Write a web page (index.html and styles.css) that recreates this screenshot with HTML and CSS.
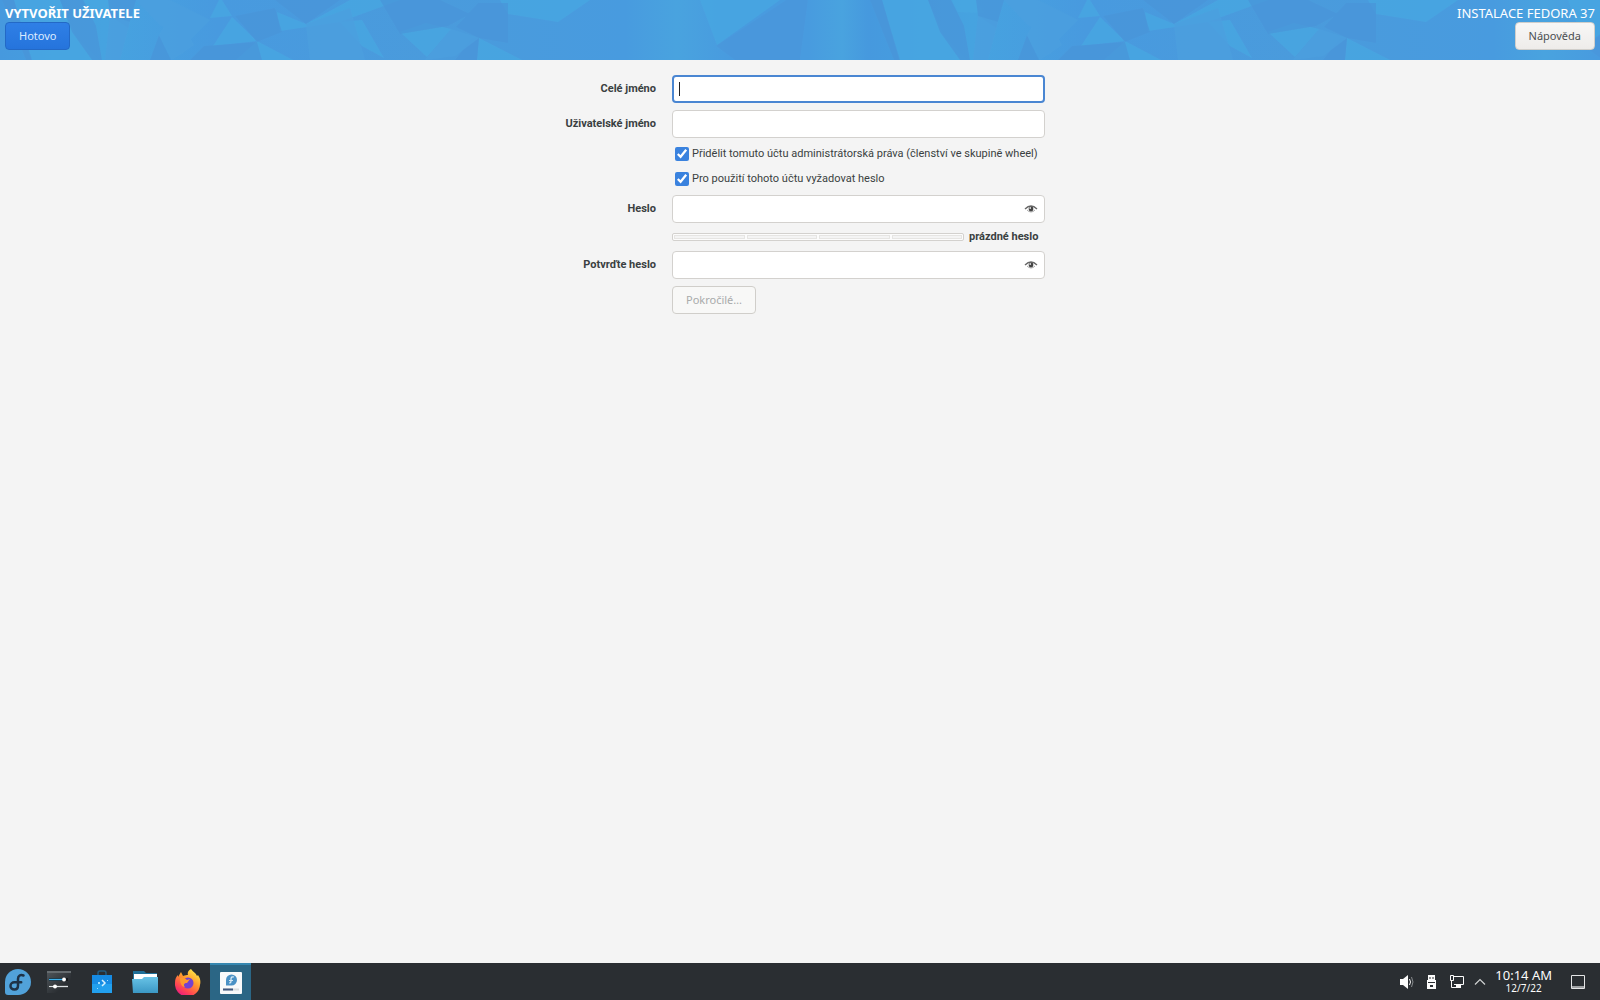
FILE: index.html
```html
<!DOCTYPE html>
<html lang="cs">
<head>
<meta charset="utf-8">
<title>Vytvořit uživatele</title>
<link rel="stylesheet" href="styles.css">
</head>
<body>
<header class="header">
  <svg class="header-art" aria-hidden="true">
    <defs>
      <linearGradient id="shade"><stop offset="0" stop-color="#4699de"/><stop offset=".12" stop-color="#46a3e0"/><stop offset=".25" stop-color="#489adf"/><stop offset=".5" stop-color="#4a9bdc"/><stop offset=".72" stop-color="#489bdf"/><stop offset=".78" stop-color="#49a3df"/><stop offset=".84" stop-color="#489bdf"/><stop offset=".93" stop-color="#489bdf"/><stop offset=".97" stop-color="#49a3df"/><stop offset="1" stop-color="#4699de"/></linearGradient>
      <pattern id="facets" width="868" height="60" patternUnits="userSpaceOnUse">
        <rect width="868" height="60" fill="url(#shade)"/>
        <g fill="#46a7e1" fill-opacity=".75">
          <path d="M14 0h46l26 60H31zM84 0h24l8 13-26-1zM222 0h-3l-9 18 22-2zM232 17l25 24-44 5zM277 12l29 12 44-24 50 0-60 22-60 9zM72 32l27 28H78zM340 22l22-2 22 38-22-12zM400 32l26-9 25 6-24 28zM479 38l43 22h-45zM500 0h90l-32 22-50-8zM700 0h80l-63 45zM257 41l36 19h-57z"/>
        </g>
        <g fill="#4994d9" fill-opacity=".7">
          <path d="M2 0h12l18 60h-6zM60 0h23l13 26 6 34H92L72 32zM108 0h28l-8 28-18-12zM235 16l40-8 7 24-25 10zM275 0h65l-34 24zM150 60l9-25 12 25zM204 46l53-4 5 18h-72zM380 0h60l30 14-22 12-48 8zM456 27l22-24h30v40l-29-5zM472 38l7 0-2 22h-22z"/>
        </g>
        <path d="M716 46L786 0h22l-8 60h-65z" fill="#4994d9" fill-opacity=".5"/>
        <g fill="#4b9fde" fill-opacity=".8">
          <path d="M110 16l20 6-10 38h-15zM159 35l15-25 20 35-22 15zM306 24l44-16 15 52h-55zM451 29l28 9-24 18-30 4zM136 0h34l40 20-20 20-30-15z"/>
        </g>
      </pattern>
    </defs>
    <rect width="100%" height="60" fill="url(#facets)"/>
  </svg>
  <div class="header-side">
    <h1 class="header-title">VYTVOŘIT UŽIVATELE</h1>
    <button class="button button-primary" type="button">Hotovo</button>
  </div>
  <div class="header-side header-side-end">
    <p class="header-product">INSTALACE FEDORA 37</p>
    <button class="button" type="button">Nápověda</button>
  </div>
</header>

<main class="content">
  <form class="form">
    <label class="label" for="fullname">Celé jméno</label>
    <div class="field">
      <input class="entry entry-focused" id="fullname" type="text">
      <span class="caret"></span>
    </div>

    <label class="label" for="username">Uživatelské jméno</label>
    <div class="field"><input class="entry" id="username" type="text"></div>

    <label class="check"><input class="check-box" type="checkbox" checked><span>Přidělit tomuto účtu administrátorská práva (členství ve skupině wheel)</span></label>
    <label class="check"><input class="check-box" type="checkbox" checked><span>Pro použití tohoto účtu vyžadovat heslo</span></label>

    <label class="label" for="password">Heslo</label>
    <div class="field">
      <input class="entry" id="password" type="password">
      <button class="reveal" type="button" aria-label="Zobrazit heslo">
        <svg width="14" height="10" viewBox="0 0 14 10"><path d="M1 5Q7-1 13 5" fill="none" stroke="#666" stroke-width="1.3"/><path d="M3 6q4 4 8 0" fill="none" stroke="#aaa"/><circle cx="7" cy="5" r="2.4" fill="#444"/><circle cx="6.200" cy="4" r=".9" fill="#ddd"/></svg>
      </button>
    </div>

    <div class="strength">
      <div class="strength-bar" role="meter" aria-label="Síla hesla" aria-valuemin="0" aria-valuemax="4" aria-valuenow="0"><i class="strength-step"></i><i class="strength-step"></i><i class="strength-step"></i><i class="strength-step"></i></div>
      <span class="strength-text">prázdné heslo</span>
    </div>

    <label class="label" for="confirm">Potvrďte heslo</label>
    <div class="field">
      <input class="entry" id="confirm" type="password">
      <button class="reveal" type="button" aria-label="Zobrazit heslo">
        <svg width="14" height="10" viewBox="0 0 14 10"><path d="M1 5Q7-1 13 5" fill="none" stroke="#666" stroke-width="1.3"/><path d="M3 6q4 4 8 0" fill="none" stroke="#aaa"/><circle cx="7" cy="5" r="2.4" fill="#444"/><circle cx="6.200" cy="4" r=".9" fill="#ddd"/></svg>
      </button>
    </div>

    <button class="button advanced" type="button" disabled>Pokročilé…</button>
  </form>
</main>

<footer class="taskbar">
  <nav class="launchers">
    <button class="task" type="button" aria-label="Fedora">
      <svg width="26" height="26" viewBox="0 0 26 26"><path d="M13 0a13 13 0 1 1 0 26H3a3 3 0 0 1-3-3V13A13 13 0 0 1 13 0z" fill="#51a2da"/><path d="M18.500 6.500c-3-1.300-5.500.3-5.500 3.500v6.500c0 2.500-1.500 4-3.600 4-2.200 0-3.900-1.500-3.900-3.600s1.700-3.600 3.900-3.600h6.800" fill="none" stroke="#1e3247" stroke-width="2.500" stroke-linecap="round"/></svg>
    </button>
    <button class="task" type="button" aria-label="Nastavení">
      <svg width="26" height="26" viewBox="0 0 26 26"><defs><linearGradient id="panel" x2="1" y2="1"><stop stop-color="#50565b"/><stop offset=".7" stop-color="#2a2e32"/></linearGradient></defs><path d="M1 2h24v22H1z" fill="url(#panel)"/><path d="M1 2h24v2H1z" fill="#666c70"/><path d="M3 10.500h19M3 17.500h19" stroke="#15181a" stroke-width="3"/><path d="M3 17.500h19" stroke="#dce1e4" stroke-width="1.500"/><path d="M3 10.500h13" stroke="#3daee9" stroke-width="1.500"/><circle cx="18" cy="10.500" r="2" fill="#fff"/><circle cx="9" cy="17.500" r="2" fill="#fff"/></svg>
    </button>
    <button class="task" type="button" aria-label="Discover">
      <svg width="26" height="26" viewBox="0 0 26 26"><path d="M9 7V4q0-2 2-2h4q2 0 2 2v3" fill="none" stroke="#235c80" stroke-width="1.500"/><path d="M3 6h20v18H3z" fill="#168be3"/><path d="M3 15h20v9H3z" fill="#22a0ee"/><path d="M13 11l3 3-3 3" fill="none" stroke="#d7f2ff" stroke-width="1.500"/><path d="M9 13h2v2H9zM18 11h1v1h-1zM8 19h1v1H8z" fill="#9edcff"/></svg>
    </button>
    <button class="task" type="button" aria-label="Soubory">
      <svg width="26" height="26" viewBox="0 0 26 26"><defs><linearGradient id="folder" x2="0" y2="1"><stop stop-color="#68c3e6"/><stop offset="1" stop-color="#3b98c5"/></linearGradient></defs><path d="M1 2h11l2 2h11v8H1z" fill="#1f6f98"/><path d="M2 5h23v6H2z" fill="#fff"/><path d="M0 10h10l2-2h14v16H1z" fill="url(#folder)"/></svg>
    </button>
    <button class="task" type="button" aria-label="Firefox">
      <svg width="26" height="26" viewBox="0 0 26 26"><defs><linearGradient id="flame" x1=".8" y1="0" x2=".2" y2="1"><stop stop-color="#fff04d"/><stop offset=".4" stop-color="#ff9a2b"/><stop offset=".75" stop-color="#ff4255"/><stop offset="1" stop-color="#e31587"/></linearGradient></defs><path d="M16 0c2 3 5 4 6 7l1-1c2 3 3 6 2 10a12.500 12.500 0 0 1-25-2c0-4 1-6 3-8v2l3-5 2 4c2-1 4-1 5-1-1-3 1-5 3-6z" fill="url(#flame)"/><circle cx="13" cy="14" r="5.500" fill="#7442cf"/><path d="M5 9c3-1 5 0 7 2l3-1-3 4c-3 0-4 2-2 4-3 0-5-3-5-9z" fill="#ff9a2b"/></svg>
    </button>
    <button class="task task-active" type="button" aria-label="Instalátor">
      <svg width="24" height="24" viewBox="0 0 24 24"><rect x="1" y="1" width="22" height="22" rx="1" fill="#f8f9fa"/><path d="M12.500 3.500a5.500 5.500 0 1 1 0 11H7V9a5.500 5.500 0 0 1 5.500-5.500z" fill="#4a91c5"/><path d="M15 6c-2-.6-3 .3-3 2v2c0 1.300-.7 2-1.700 2" fill="none" stroke="#d8e9f4" stroke-width="1.300"/><path d="M10 9.500h4" stroke="#d8e9f4"/><path d="M4 18.500h16" stroke="#d9dcde" stroke-width="2"/><path d="M4 18.500h10" stroke="#40577e" stroke-width="2"/></svg>
    </button>
  </nav>
  <div class="tray">
    <svg width="16" height="16" viewBox="0 0 16 16"><path d="M1 5h3l5-4v14l-5-4H1z" fill="#fcfcfc"/><path d="M10.500 5q2 3 0 6" fill="none" stroke="#fcfcfc"/><path d="M12.500 3q3 5 0 10" fill="none" stroke="#878b8e"/></svg>
    <svg width="16" height="16" viewBox="0 0 16 16"><path d="M4 1h7v5h1v9H3V6h1z" fill="#fcfcfc"/><path d="M5.500 3h1v2h-1zM8.500 3h1v2h-1zM4 8h7v1H4zM6 11h3v2H6z" fill="#2a2e32"/></svg>
    <svg width="16" height="16" viewBox="0 0 16 16"><path d="M5 2.500h9.500v8H5M2.500 7v6.500h5M1.500 1.500h3v5h-3z" fill="none" stroke="#fcfcfc"/><path d="M7 11h5v3H7z" fill="#fcfcfc"/></svg>
    <svg class="tray-arrow" width="12" height="16" viewBox="0 0 12 16"><path d="M1 10.500l5-5 5 5" fill="none" stroke="#d0d2d3" stroke-width="1.200"/></svg>
    <div class="clock"><span class="clock-time">10:14 AM</span><span class="clock-date">12/7/22</span></div>
    <svg width="16" height="16" viewBox="0 0 16 16"><path d="M1.500 1.500h13v13h-13z" fill="none" stroke="#e4e5e6"/><path d="M2 12h12v2H2z" fill="#9fa2a4"/></svg>
  </div>
</footer>
</body>
</html>
```
FILE: styles.css
```css
* {
  box-sizing: border-box;
}

body {
  margin: 0;
  min-height: 100vh;
  display: flex;
  flex-direction: column;
  background: #f4f4f4;
  color: #3a3f41;
  font: 11px/14px Roboto, "Noto Sans", sans-serif;
}

button,
input {
  font: inherit;
  color: inherit;
}

/* Header */
.header {
  position: relative;
  display: flex;
  justify-content: space-between;
  height: 60px;
  padding: 5px;
  color: #fff;
}

.header-art {
  position: absolute;
  inset: 0;
  width: 100%;
  height: 100%;
}

.header-side {
  position: relative;
  display: flex;
  flex-direction: column;
  align-items: flex-start;
}

.header-side-end {
  align-items: flex-end;
}

.header-title,
.header-product {
  margin: 0;
  font-family: "Noto Sans", sans-serif;
  font-size: 13px;
  line-height: 17px;
  font-weight: 400;
}

.header-title {
  font-weight: 700;
}

.button {
  height: 28px;
  padding: 0 13px;
  border: 1px solid #d0ceca;
  border-radius: 4px;
  background: linear-gradient(#f8f7f6, #eeecea);
  color: #4b4f51;
  font-family: "Noto Sans", sans-serif;
}

.button-primary {
  border-color: #2369c6;
  background: linear-gradient(#2f7fe6, #2574dc);
  color: #dceaff;
}

/* Form */
.content {
  flex: 1;
  padding: 15px;
}

.form {
  display: grid;
  grid-template-columns: 101px 373px;
  justify-content: center;
  align-items: center;
  gap: 7px 16px;
}

.label {
  text-align: right;
  font-weight: 700;
  white-space: nowrap;
}

.field {
  position: relative;
  display: flex;
}

.entry {
  width: 100%;
  height: 28px;
  padding: 0 8px;
  border: 1px solid #d3d1ce;
  border-radius: 4px;
  outline: none;
  background: #fff;
}

.entry-focused {
  border: 2px solid #4a86d2;
  caret-color: transparent;
}

.caret {
  position: absolute;
  left: 7px;
  top: 7px;
  width: 1px;
  height: 14px;
  background: #222;
}

.reveal {
  position: absolute;
  right: 6px;
  top: 6px;
  display: grid;
  place-items: center;
  width: 16px;
  height: 16px;
  padding: 0;
  border: 0;
  background: none;
}

.check {
  grid-column: 2;
  display: flex;
  align-items: center;
  gap: 3px;
  height: 18px;
  padding-left: 3px;
  white-space: nowrap;
}

.check-box {
  flex: none;
  width: 14px;
  height: 14px;
  margin: 0;
  accent-color: #3a82de;
}

.strength {
  grid-column: 2;
  display: flex;
  align-items: center;
  gap: 5px;
  height: 14px;
}

.strength-bar {
  flex: none;
  display: flex;
  gap: 2px;
  width: 292px;
  height: 8px;
  padding: 1px;
  border: 1px solid #d3d1ce;
  border-radius: 2px;
  background: #fcfcfc;
}

.strength-step {
  flex: 1;
  border: 1px solid #e6e5e3;
  background: #f4f4f4;
}

.strength-text {
  font-weight: 700;
  white-space: nowrap;
}

.advanced {
  grid-column: 2;
  justify-self: start;
  background: #f8f8f7;
  color: #a9abab;
}

/* Desktop panel */
.taskbar {
  display: flex;
  justify-content: space-between;
  height: 37px;
  background: #2a2e32;
  color: #fcfcfc;
  font-family: "Noto Sans", sans-serif;
}

.launchers {
  display: flex;
  gap: 2px;
}

.task {
  display: grid;
  place-items: center;
  width: 41px;
  padding: 0;
  border: 0;
  background: none;
}

.task:first-child {
  width: 36px;
}

.task-active {
  border-top: 2px solid #3687b0;
  background: #2b6685;
}

.tray {
  display: flex;
  align-items: center;
  gap: 9px;
  padding-right: 14px;
}

.clock {
  display: flex;
  flex-direction: column;
  align-items: center;
  padding-right: 9px;
}

.clock-time {
  font-size: 13px;
  line-height: 13px;
}

.clock-date {
  font-size: 10px;
  line-height: 12px;
}
```
